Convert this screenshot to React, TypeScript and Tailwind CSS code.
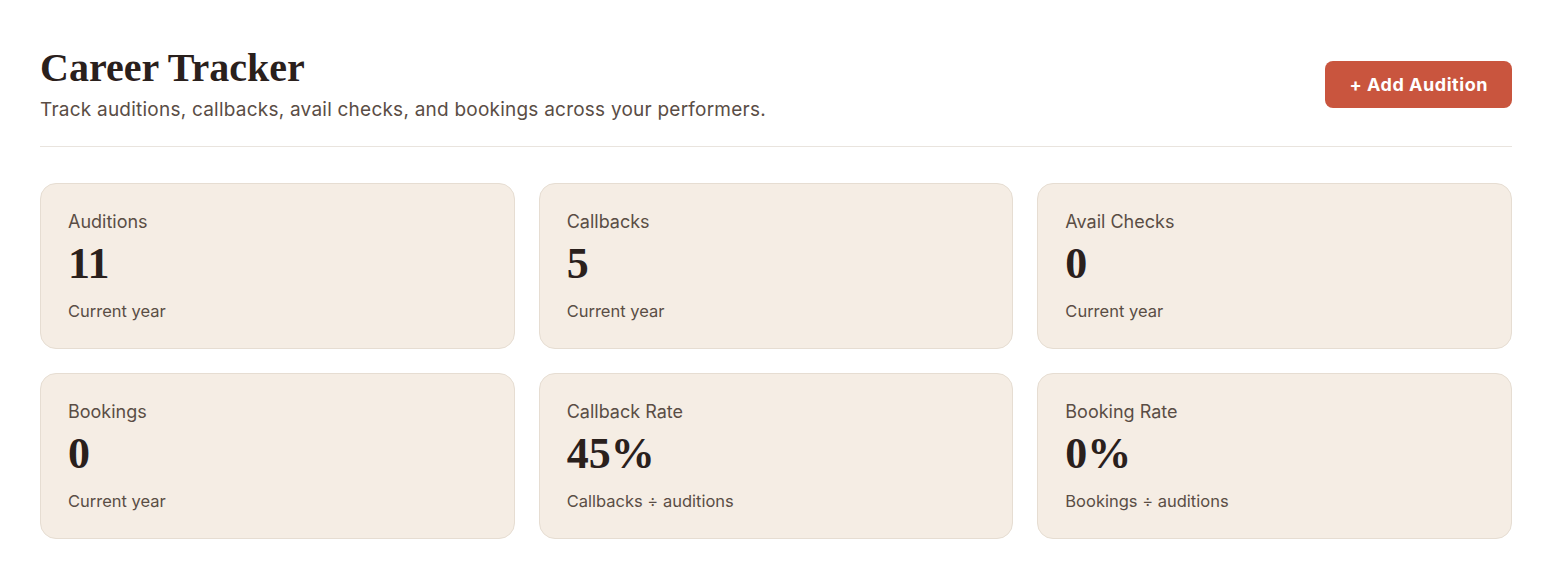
const stats = [
  { label: "Auditions", value: "11", note: "Current year" },
  { label: "Callbacks", value: "5", note: "Current year" },
  { label: "Avail Checks", value: "0", note: "Current year" },
  { label: "Bookings", value: "0", note: "Current year" },
  { label: "Callback Rate", value: "45%", note: "Callbacks ÷ auditions" },
  { label: "Booking Rate", value: "0%", note: "Bookings ÷ auditions" },
]

function StatCard({ label, value, note }: { label: string; value: string; note: string }) {
  return (
    <div className="h-[166px] rounded-2xl border border-[#e6ddd2] bg-[#f5ede4] px-[27px] pt-[26px]">
      <p className="text-[18px] leading-6 text-[#5a4d45]">{label}</p>
      <p className="mt-[6px] font-['Liberation_Serif',serif] text-[44px] font-bold leading-[48px] text-[#2a201c]">
        {value}
      </p>
      <p className="mt-[11px] text-[16.5px] leading-6 text-[#5a4d45]">{note}</p>
    </div>
  )
}

export default function App() {
  return (
    <main className="min-h-screen bg-white pl-10 pr-[46px] pt-[44px] font-['Inter',sans-serif]">
      {/* Header */}
      <div className="flex items-center justify-between border-b border-[#e9e4de] pb-[22px]">
        <div>
          <h1 className="font-['Liberation_Serif',serif] text-[40px] font-bold leading-[48px] text-[#2a201c]">
            Career Tracker
          </h1>
          <p className="mt-1 text-[19px] leading-7 tracking-[0.012em] text-[#5a4d45]">
            Track auditions, callbacks, avail checks, and bookings across your performers.
          </p>
        </div>
        <button
          type="button"
          className="h-[47px] rounded-lg bg-[#c9553e] px-6 text-[18px] font-bold tracking-[0.03em] text-white"
        >
          + Add Audition
        </button>
      </div>

      {/* Stats */}
      <div className="mt-9 grid grid-cols-3 gap-6">
        {stats.map((s) => (
          <StatCard key={s.label} {...s} />
        ))}
      </div>
    </main>
  )
}
